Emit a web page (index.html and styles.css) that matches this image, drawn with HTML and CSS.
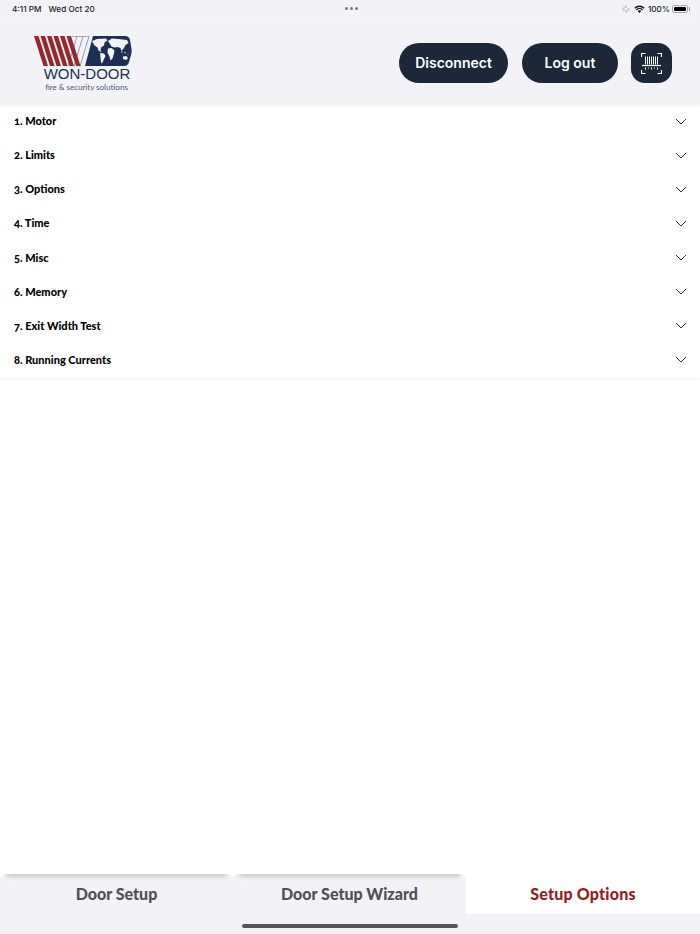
FILE: index.html
```html
<!DOCTYPE html>
<html lang="en">
<head>
    <meta charset="UTF-8">
    <meta name="viewport" content="width=device-width, initial-scale=1.0">
    <title>Setup Options</title>
    <link rel="stylesheet" href="styles.css">
</head>
<body>
    <div class="app">
        <div class="status-bar">
            <div class="status-time"><span>4:11 PM</span><span>Wed Oct 20</span></div>
            <div class="status-dots"><i></i><i></i><i></i></div>
            <div class="status-right">
                <svg class="icon-moon" width="8" height="8" viewBox="0 0 8 8"><path d="M4 .5v2M4 5.500v2M.5 4h2M5.500 4h2M1.500 1.500l1 1M5.500 5.500l1 1M1.500 6.500l1-1" stroke="#8a8a90" stroke-width=".9" fill="none"/></svg>
                <svg class="icon-wifi" width="11" height="8" viewBox="0 0 11 8"><path d="M.4 2.700a7.300 7.300 0 0 1 10.200 0l-.9 1a6 6 0 0 0-8.400 0zM2 4.400a5 5 0 0 1 7 0l-.9 1a3.700 3.700 0 0 0-5.200 0zM3.700 6.100a2.600 2.600 0 0 1 3.600 0L5.500 8z" fill="#111"/></svg>
                <span>100%</span>
                <div class="battery"><div class="battery-fill"></div></div>
            </div>
        </div>

        <header class="header">
            <div class="logo">
                <svg width="98" height="31" viewBox="0 0 98 31">
                    <g fill="none" stroke="#55617c" stroke-width=".6">
                        <path d="M38 .3h17M43 .3l-9 30M49 .3l-9 30M55 .3l-9 30"/>
                    </g>
                    <g fill="#97272c">
                        <polygon points="0,0 4.500,0 14,30 9.500,30"/>
                        <polygon points="6.500,0 11,0 20.500,30 16,30"/>
                        <polygon points="13,0 17.500,0 27,30 22.500,30"/>
                        <polygon points="19.500,0 24,0 33.500,30 29,30"/>
                        <polygon points="26,0 30.500,0 40,30 35.500,30"/>
                        <polygon points="32.500,0 37,0 46.500,30 42,30"/>
                    </g>
                    <path d="M59 0H91q4 0 5 4l1.500 9q.5 3-.5 6l-2 7q-1 4-5 4H51z" fill="#1d2f52"/>
                    <g fill="#f2f2f7">
                        <path d="M58 5l5-2 9-.5 1.500 2-3 2-.5 3-3 2-.5 3 1 2-3-2-1-3-3-2z"/>
                        <path d="M66 17l4 .5 1.500 2.500-2 4-1.500 3.500-1-1-.5-5z"/>
                        <path d="M74 5l4-2.500 6 .5 9 1 1.500 3-3 2-1.500 3-2.500 3-1-3-3-1-3 .5-3-1z"/>
                        <path d="M74 12.500l3.500-.5 3 2.500-.5 3-1.500 5-2 2-1-4-2-4z"/>
                        <path d="M89 20.500l3.500-.5 1.500 2.500-2 1.500-3-1z"/>
                        <circle cx="88" cy="16" r=".7"/>
                        <circle cx="91" cy="16.500" r=".7"/>
                        <circle cx="94" cy="18" r=".5"/>
                    </g>
                </svg>
                <div class="logo-name">WON-DOOR</div>
                <div class="logo-sub">fire &amp; security solutions</div>
            </div>
            <div class="header-actions">
                <button class="pill pill-wide">Disconnect</button>
                <button class="pill">Log out</button>
                <button class="scan-btn" aria-label="Scan">
                    <svg width="21" height="21" viewBox="0 0 21 21" fill="none" stroke="#fff">
                        <path d="M.5 4V.5h4M16.500.5h4V4M.5 17v3.500h4M16.500 20.500h4V17" stroke-width="1.200"/>
                        <path d="M1 12.500h19" stroke-width="1.200"/>
                        <path d="M4.500 3.500v8M6.500 3.500v8M8.500 3.500v8M10.500 3.500v8M12.500 3.500v8M14.500 3.500v8M16.500 3.500v8" stroke-width="1"/>
                        <path d="M4.500 14.500v2M7.500 14.500v1M10.500 14.500v2M13.500 14.500v1M16.500 14.500v2" stroke-width="1"/>
                    </svg>
                </button>
            </div>
        </header>

        <ul class="menu">
            <li class="menu-row"><span>1. Motor</span><svg class="chevron" width="12" height="8" viewBox="0 0 12 8"><path d="M1 1l5 5 5-5"/></svg></li>
            <li class="menu-row"><span>2. Limits</span><svg class="chevron" width="12" height="8" viewBox="0 0 12 8"><path d="M1 1l5 5 5-5"/></svg></li>
            <li class="menu-row"><span>3. Options</span><svg class="chevron" width="12" height="8" viewBox="0 0 12 8"><path d="M1 1l5 5 5-5"/></svg></li>
            <li class="menu-row"><span>4. Time</span><svg class="chevron" width="12" height="8" viewBox="0 0 12 8"><path d="M1 1l5 5 5-5"/></svg></li>
            <li class="menu-row"><span>5. Misc</span><svg class="chevron" width="12" height="8" viewBox="0 0 12 8"><path d="M1 1l5 5 5-5"/></svg></li>
            <li class="menu-row"><span>6. Memory</span><svg class="chevron" width="12" height="8" viewBox="0 0 12 8"><path d="M1 1l5 5 5-5"/></svg></li>
            <li class="menu-row"><span>7. Exit Width Test</span><svg class="chevron" width="12" height="8" viewBox="0 0 12 8"><path d="M1 1l5 5 5-5"/></svg></li>
            <li class="menu-row"><span>8. Running Currents</span><svg class="chevron" width="12" height="8" viewBox="0 0 12 8"><path d="M1 1l5 5 5-5"/></svg></li>
        </ul>

        <div class="spacer"></div>

        <nav class="tabs">
            <div class="tab">Door Setup</div>
            <div class="tab">Door Setup Wizard</div>
            <div class="tab tab-active">Setup Options</div>
        </nav>
        <div class="home-area"><div class="home-bar"></div></div>
    </div>
</body>
</html>
```

FILE: styles.css
```css
* {
    box-sizing: border-box;
}

body {
    margin: 0;
    padding: 0;
    font-family: Inter, Arial, sans-serif;
    background-color: white;
}

.app {
    width: 700px;
    height: 934px;
    display: flex;
    flex-direction: column;
    overflow: hidden;
}

.status-bar {
    height: 17px;
    background-color: #f2f2f7;
    padding: 0 10px 0 12px;
    display: grid;
    grid-template-columns: 1fr auto 1fr;
    align-items: center;
    font-size: 8.200px;
    font-weight: 500;
    color: #222;
}

.status-time {
    display: flex;
    gap: 7px;
}

.status-dots {
    display: flex;
    gap: 2px;
}

.status-dots i {
    width: 3px;
    height: 3px;
    border-radius: 50%;
    background-color: #77777c;
}

.status-right {
    display: flex;
    justify-content: flex-end;
    align-items: center;
    gap: 2px;
}

.icon-wifi {
    margin: 0 1px 0 2px;
}

.battery {
    width: 16px;
    height: 8px;
    margin-right: 2px;
    padding: 1px;
    border: 1px solid #aaa;
    border-radius: 2px;
    position: relative;
}

.battery::after {
    content: "";
    position: absolute;
    right: -3px;
    top: 1px;
    width: 1px;
    height: 4px;
    background-color: #999;
}

.battery-fill {
    height: 100%;
    background-color: #000;
    border-radius: 1px;
}

.header {
    height: 88px;
    background-color: #f2f2f7;
    padding: 19px 28px 0 34px;
    display: flex;
    justify-content: space-between;
    align-items: flex-start;
    box-shadow: 0 1px 3px rgba(0, 0, 0, 0.06);
    position: relative;
}

.logo {
    width: 98px;
    color: #1d2f52;
    text-align: center;
}

.logo svg {
    display: block;
}

.logo-name {
    padding-left: 8px;
    font-family: "Liberation Sans", Arial, sans-serif;
    font-size: 15px;
    line-height: 14px;
    white-space: nowrap;
}

.logo-sub {
    margin-top: 2px;
    padding-left: 7px;
    font-family: Lato, Arial, sans-serif;
    font-size: 8px;
    line-height: 9px;
    color: #4d5a75;
    white-space: nowrap;
}

.header-actions {
    display: flex;
    padding-top: 7px;
}

.pill {
    height: 40px;
    width: 96px;
    margin-right: 13px;
    padding: 0 0 2px;
    border: none;
    border-radius: 20px;
    background-color: #1c2739;
    color: white;
    font-family: Inter, Arial, sans-serif;
    font-size: 14px;
    font-weight: 600;
}

.pill-wide {
    width: 109px;
    margin-right: 14px;
}

.scan-btn {
    width: 41px;
    height: 40px;
    padding: 0;
    border: none;
    border-radius: 14px;
    background-color: #1c2739;
    display: flex;
    justify-content: center;
    align-items: center;
}

.menu {
    list-style: none;
    margin: 0;
    padding: 0;
    box-shadow: 0 1px 2px rgba(0, 0, 0, 0.06);
}

.menu-row {
    height: 34.140px;
    padding: 0 13px 2px 14px;
    display: flex;
    justify-content: space-between;
    align-items: center;
    font-family: Lato, Arial, sans-serif;
    font-size: 11px;
    font-weight: 900;
    font-variant-numeric: oldstyle-nums;
    color: #000;
}

.menu-row span {
    margin-bottom: 1px;
}

.chevron {
    margin-top: 1px;
    fill: none;
    stroke: #333;
    stroke-width: 1;
}

.spacer {
    flex: 1;
}

.tabs {
    height: 40px;
    display: grid;
    grid-template-columns: 233px 233px 234px;
    background-color: white;
}

.tab {
    padding-bottom: 2px;
    display: flex;
    justify-content: center;
    align-items: center;
    font-family: Lato, Arial, sans-serif;
    font-size: 16px;
    font-weight: 900;
    color: #505055;
    background-color: #f2f2f7;
    border-radius: 6px 6px 0 0;
    position: relative;
    overflow: hidden;
}

.tab::before {
    content: "";
    position: absolute;
    top: -4px;
    left: 6px;
    right: 6px;
    height: 7px;
    border-radius: 3px;
    background-color: rgba(0, 0, 0, 0.16);
    filter: blur(2px);
}

.tab-active {
    background-color: white;
    color: #8f1f24;
    border-radius: 0;
    letter-spacing: 0.2px;
}

.tab-active::before {
    display: none;
}

.home-area {
    height: 20px;
    background-color: #f2f2f7;
    display: flex;
    justify-content: center;
    padding-top: 10px;
}

.home-bar {
    width: 216px;
    height: 4px;
    border-radius: 2px;
    background-color: #555;
}
```
